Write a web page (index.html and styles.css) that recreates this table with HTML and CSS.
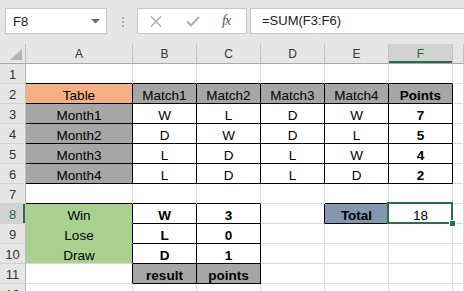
FILE: index.html
```html
<!DOCTYPE html>
<html>
<head>
<meta charset="utf-8">
<link rel="stylesheet" href="styles.css">
</head>
<body>
<div class="app">
  <div class="toolbar">
    <div class="namebox">
      <span class="nb-text">F8</span>
      <svg class="nb-arrow" width="9" height="5" viewBox="0 0 9 5"><polygon points="0,0 9,0 4.5,4.5" fill="#6b6b6b"/></svg>
    </div>
    <svg class="dots" width="3" height="11" viewBox="0 0 3 11"><rect x="0" y="0" width="2" height="2" fill="#a8a8a8"/><rect x="0" y="4" width="2" height="2" fill="#a8a8a8"/><rect x="0" y="8" width="2" height="2" fill="#a8a8a8"/></svg>
    <div class="fxbox">
      <svg class="ic-x" width="12" height="11" viewBox="0 0 12 11"><path d="M1 0.5 L11 10.5 M11 0.5 L1 10.5" stroke="#a8a8a8" stroke-width="1.3" fill="none"/></svg>
      <svg class="ic-ok" width="14" height="11" viewBox="0 0 14 11"><path d="M1 5.5 L5 9.5 L13 1" stroke="#b0b0b0" stroke-width="2" fill="none"/></svg>
      <span class="ic-fx">fx</span>
    </div>
    <div class="formula">=SUM(F3:F6)</div>
  </div>
  <div class="grid">
    <!-- header -->
    <div class="corner"><svg width="25" height="19" viewBox="0 0 25 19"><polygon points="10,16 22,16 22,5" fill="#b4b4b4"/></svg></div>
    <div class="ch">A</div><div class="ch">B</div><div class="ch">C</div><div class="ch">D</div><div class="ch">E</div><div class="ch sel">F</div><div class="ch"></div>
    <!-- row 1 -->
    <div class="rh">1</div><div class="c bb"></div><div class="c bb"></div><div class="c bb"></div><div class="c bb"></div><div class="c bb"></div><div class="c bb"></div><div class="c"></div>
    <!-- row 2 -->
    <div class="rh">2</div><div class="c or bb br">Table</div><div class="c gy bb br">Match1</div><div class="c gy bb br">Match2</div><div class="c gy bb br">Match3</div><div class="c gy bb br">Match4</div><div class="c gy bb br b">Points</div><div class="c"></div>
    <!-- row 3 -->
    <div class="rh">3</div><div class="c gy bb br">Month1</div><div class="c bb br">W</div><div class="c bb br">L</div><div class="c bb br">D</div><div class="c bb br">W</div><div class="c bb br b">7</div><div class="c"></div>
    <!-- row 4 -->
    <div class="rh">4</div><div class="c gy bb br">Month2</div><div class="c bb br">D</div><div class="c bb br">W</div><div class="c bb br">D</div><div class="c bb br">L</div><div class="c bb br b">5</div><div class="c"></div>
    <!-- row 5 -->
    <div class="rh">5</div><div class="c gy bb br">Month3</div><div class="c bb br">L</div><div class="c bb br">D</div><div class="c bb br">L</div><div class="c bb br">W</div><div class="c bb br b">4</div><div class="c"></div>
    <!-- row 6 -->
    <div class="rh">6</div><div class="c gy bb br">Month4</div><div class="c bb br">L</div><div class="c bb br">D</div><div class="c bb br">L</div><div class="c bb br">D</div><div class="c bb br b">2</div><div class="c"></div>
    <!-- row 7 -->
    <div class="rh">7</div><div class="c bb"></div><div class="c bb"></div><div class="c bb"></div><div class="c"></div><div class="c bb"></div><div class="c"></div><div class="c"></div>
    <!-- row 8 -->
    <div class="rh rsel">8</div><div class="c gn gnb br">Win</div><div class="c bb br b">W</div><div class="c bb br b">3</div><div class="c br"></div><div class="c bl bb br b">Total</div><div class="c active">18</div><div class="c"></div>
    <!-- row 9 -->
    <div class="rh">9</div><div class="c gn gnb br">Lose</div><div class="c bb br b">L</div><div class="c bb br b">0</div><div class="c"></div><div class="c"></div><div class="c"></div><div class="c"></div>
    <!-- row 10 -->
    <div class="rh">10</div><div class="c gn br">Draw</div><div class="c bb br b">D</div><div class="c bb br b">1</div><div class="c"></div><div class="c"></div><div class="c"></div><div class="c"></div>
    <!-- row 11 -->
    <div class="rh">11</div><div class="c br"></div><div class="c gy bb br b">result</div><div class="c gy bb br b">points</div><div class="c"></div><div class="c"></div><div class="c"></div><div class="c"></div>
    <!-- row 12 -->
    <div class="rh">12</div><div class="c"></div><div class="c"></div><div class="c"></div><div class="c"></div><div class="c"></div><div class="c"></div><div class="c"></div>
  </div>
</div>
</body>
</html>
```

FILE: styles.css
```css
html, body {
  margin: 0;
  padding: 0;
  overflow: hidden;
  background: #ffffff;
}
.app {
  width: 464px;
  height: 291px;
  overflow: hidden;
  font-family: "Liberation Sans", Arial, sans-serif;
}
.toolbar {
  height: 44px;
  background: #e6e6e6;
  display: flex;
  align-items: flex-start;
  padding-top: 8px;
  box-sizing: border-box;
}
.namebox {
  margin-left: 5px;
  width: 102px;
  height: 26px;
  box-sizing: border-box;
  background: #fff;
  border: 1px solid #c6c6c6;
  display: flex;
  align-items: center;
  justify-content: space-between;
  padding: 0 6px 0 7px;
}
.nb-text {
  font-size: 13px;
  color: #222;
}
.dots {
  margin-left: 15px;
  margin-top: 9px;
}
.fxbox {
  margin-left: 12px;
  width: 110px;
  height: 26px;
  box-sizing: border-box;
  background: #fff;
  border: 1px solid #c6c6c6;
  display: flex;
  align-items: center;
  padding-left: 12px;
}
.ic-ok {
  margin-left: 24px;
}
.ic-fx {
  margin-left: 22px;
  font-family: "Liberation Serif", serif;
  font-style: italic;
  font-size: 14px;
  color: #555;
  letter-spacing: -1px;
}
.formula {
  margin-left: 3px;
  flex: 1;
  height: 26px;
  box-sizing: border-box;
  background: #fff;
  border: 1px solid #c6c6c6;
  border-right: none;
  font-size: 13px;
  color: #222;
  line-height: 24px;
  padding-left: 11px;
}
.grid {
  display: grid;
  grid-template-columns: 26px 107px 64px 64px 64px 64px 64px 1fr;
  grid-auto-rows: 20px;
}
.grid > div {
  box-sizing: border-box;
  overflow: hidden;
  white-space: nowrap;
}
.corner {
  background: #e6e6e6;
  border-right: 1px solid #bdbdbd;
  border-bottom: 1px solid #a9a9a9;
}
.corner svg { display: block; }
.ch {
  background: #e6e6e6;
  border-right: 1px solid #c3c3c3;
  border-bottom: 1px solid #a9a9a9;
  text-align: center;
  font-size: 12px;
  color: #333;
  line-height: 14px;
  padding-top: 3px;
}
.ch.sel {
  background: #d2d2d2;
  color: #1e6b44;
  box-shadow: inset 0 -2px 0 #217346;
}
.rh {
  background: #e6e6e6;
  border-right: 1px solid #bdbdbd;
  border-bottom: 1px solid #d0d0d0;
  text-align: center;
  font-size: 13px;
  color: #333;
  line-height: 17px;
  padding-top: 2px;
}
.rh.rsel {
  background: #d2d2d2;
  color: #1e6b44;
  box-shadow: inset -2px 0 0 #217346;
}
.c {
  border-right: 1px solid #d9d9d9;
  border-bottom: 1px solid #d9d9d9;
  text-align: center;
  font-size: 13.5px;
  color: #000;
  line-height: 17px;
  padding-top: 3px;
}
.grid > .bb { border-bottom-color: #000; }
.grid > .br { border-right-color: #000; }
.b { font-weight: bold; }
.or { background: #f4b084; }
.gy { background: #a6a6a6; }
.gn { background: #a9d08e; }
.grid > .gnb { border-bottom-color: #a9d08e; }
.bl { background: #8497b0; }
.grid > .active {
  position: relative;
  overflow: visible;
}
.active::after {
  content: "";
  position: absolute;
  top: -2px;
  left: -2px;
  right: -1px;
  bottom: -1px;
  border: 2px solid #217346;
}
.active::before {
  content: "";
  position: absolute;
  right: -4px;
  bottom: -4px;
  width: 5px;
  height: 5px;
  background: #217346;
  border: 1px solid #fff;
  z-index: 2;
}
```
